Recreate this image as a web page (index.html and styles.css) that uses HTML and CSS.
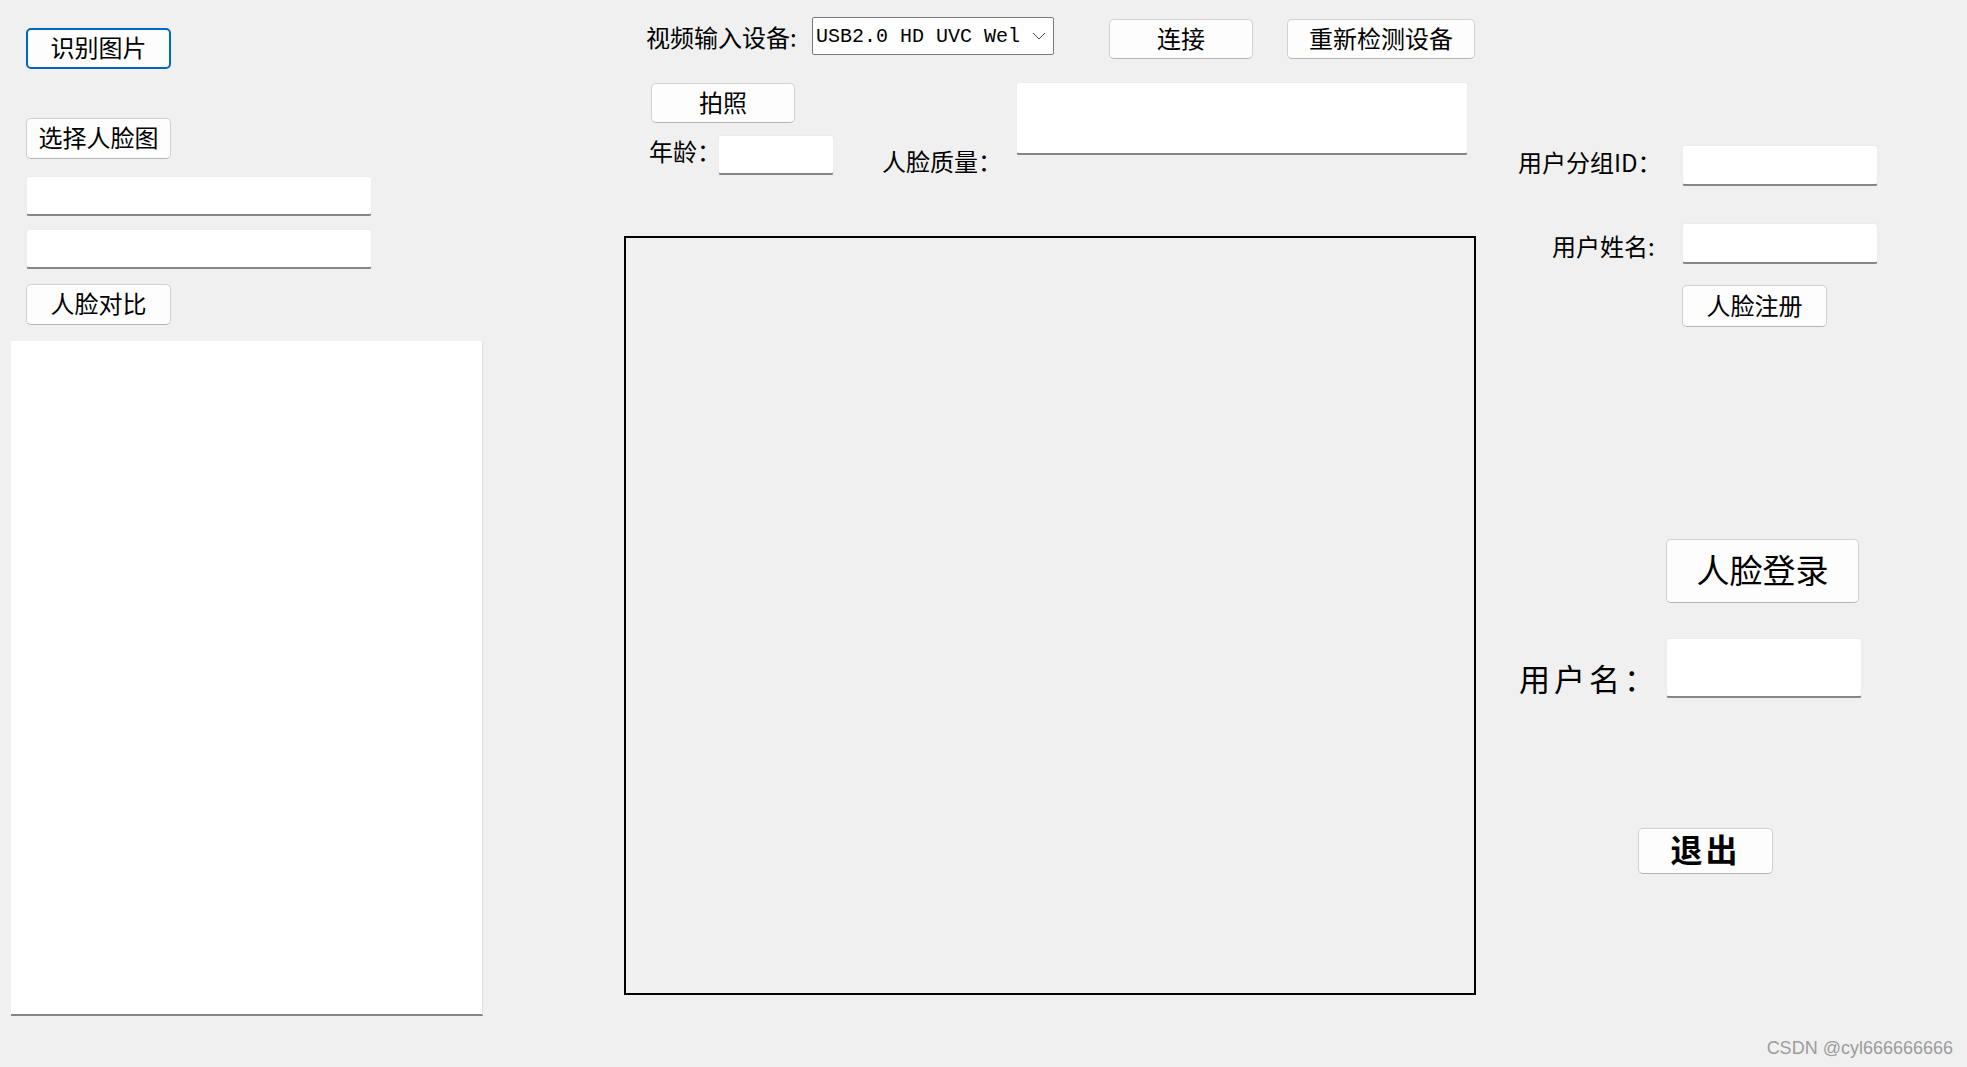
FILE: index.html
```html
<!DOCTYPE html>
<html lang="zh-CN">

<head>
  <meta charset="UTF-8" />
  <meta name="viewport" content="width=device-width, initial-scale=1.0" />
  <title>人脸识别</title>
  <link rel="stylesheet" href="styles.css">
</head>

<body>
  <div class="form">
    <div class="col-left">
      <button class="btn btn-focus btn-recognize">识别图片</button>
      <button class="btn btn-choose">选择人脸图</button>
      <input class="field field-path" type="text" />
      <input class="field field-path field-path2" type="text" />
      <button class="btn btn-compare">人脸对比</button>
      <div class="result-panel"></div>
    </div>

    <div class="col-center">
      <div class="device-row">
        <span class="lbl lbl-device">视频输入设备:</span>
        <div class="combo">
          <span class="combo-text">USB2.0 HD UVC Wel</span>
          <svg class="combo-arrow" width="14" height="8" viewBox="0 0 14 8">
            <polyline points="1,1 7,7 13,1" fill="none" stroke="#444" stroke-width="1" />
          </svg>
        </div>
        <button class="btn btn-connect">连接</button>
        <button class="btn btn-redetect">重新检测设备</button>
      </div>

      <div class="info-row">
        <div class="photo-block">
          <button class="btn btn-photo">拍照</button>
          <div class="age-row">
            <span class="lbl lbl-age">年龄：</span>
            <input class="field field-age" type="text" />
          </div>
        </div>
        <span class="lbl lbl-quality">人脸质量：</span>
        <div class="quality-box"></div>
      </div>

      <div class="video-box"></div>
    </div>

    <div class="col-right">
      <div class="reg-row reg-group">
        <span class="lbl lbl-group">用户分组ID：</span>
        <input class="field field-reg" type="text" />
      </div>
      <div class="reg-row reg-name">
        <span class="lbl lbl-name">用户姓名:</span>
        <input class="field field-reg" type="text" />
      </div>
      <button class="btn btn-register">人脸注册</button>

      <button class="btn btn-login">人脸登录</button>
      <div class="reg-row login-row">
        <span class="lbl lbl-user">用户名：</span>
        <input class="field field-user" type="text" />
      </div>
      <button class="btn btn-exit">退出</button>
    </div>
  </div>

  <div class="watermark">CSDN @cyl666666666</div>
</body>

</html>
```

FILE: styles.css
```css
body {
  margin: 0;
  width: 1967px;
  height: 1067px;
  overflow: hidden;
  position: relative;
  background-color: #f0f0f0;
  font-family: "Noto Sans CJK SC", "Noto Sans", sans-serif;
  color: #000;
}

.form {
  display: flex;
  height: 1067px;
}

/* controls */

.btn {
  display: flex;
  align-items: center;
  justify-content: center;
  box-sizing: border-box;
  padding: 0 0 3px;
  background-color: #fdfdfd;
  border: 1px solid #d0d0d0;
  border-bottom-color: #b4b4b4;
  border-radius: 5px;
  font-family: inherit;
  font-size: 24px;
  line-height: 1;
  color: #000;
  cursor: pointer;
}

.btn-focus {
  border: 2px solid #0067c0;
}

.field {
  display: block;
  box-sizing: border-box;
  margin: 0;
  padding: 0 6px;
  background-color: #fff;
  border: 1px solid #ececec;
  border-bottom: 2px solid #868686;
  border-radius: 3px;
  font-family: inherit;
  font-size: 22px;
  outline: none;
}

.lbl {
  font-size: 24px;
  line-height: 26px;
  white-space: nowrap;
}

/* left column */

.col-left {
  width: 483px;
  flex-shrink: 0;
}

.col-left .btn {
  width: 145px;
  height: 41px;
  margin-left: 26px;
}

.btn-recognize {
  margin-top: 28px;
}

.btn-choose {
  margin-top: 49px;
}

.field-path {
  width: 346px;
  height: 40px;
  margin: 17px 0 0 26px;
}

.field-path2 {
  margin-top: 13px;
}

.btn-compare {
  margin-top: 15px;
}

.result-panel {
  box-sizing: border-box;
  width: 472px;
  height: 675px;
  margin: 16px 0 0 11px;
  background-color: #fff;
  border-right: 1px solid #e2e2e2;
  border-bottom: 2px solid #858585;
}

/* center column */

.col-center {
  width: 852px;
  padding-left: 141px;
  flex-shrink: 0;
}

.device-row {
  display: flex;
  align-items: flex-start;
  padding-top: 17px;
}

.lbl-device {
  width: 166px;
  margin: 7px 0 0 22px;
}

.combo {
  display: flex;
  align-items: center;
  justify-content: space-between;
  box-sizing: border-box;
  width: 242px;
  height: 38px;
  padding: 0 7px 0 3px;
  background-color: #fff;
  border: 1px solid #7a7a7a;
  border-radius: 2px;
}

.combo-text {
  font-family: "Liberation Mono", monospace;
  font-size: 20px;
  white-space: nowrap;
}

.btn-connect {
  width: 144px;
  height: 40px;
  margin: 2px 0 0 55px;
}

.btn-redetect {
  width: 188px;
  height: 40px;
  margin: 2px 0 0 34px;
}

.info-row {
  display: flex;
  align-items: flex-start;
  margin-top: 23px;
}

.photo-block {
  width: 185px;
  margin-left: 25px;
}

.btn-photo {
  width: 144px;
  height: 40px;
  margin: 1px 0 0 2px;
}

.age-row {
  display: flex;
  align-items: flex-start;
  margin-top: 12px;
}

.lbl-age {
  width: 69px;
  padding-top: 3px;
}

.field-age {
  width: 116px;
  height: 40px;
}

.lbl-quality {
  margin: 66px 0 0 48px;
}

.quality-box {
  box-sizing: border-box;
  width: 452px;
  height: 73px;
  margin-left: 14px;
  background-color: #fff;
  border: 1px solid #ececec;
  border-bottom: 2px solid #868686;
  border-radius: 3px;
}

.video-box {
  box-sizing: border-box;
  width: 852px;
  height: 759px;
  margin-top: 61px;
  border: 2px solid #000;
}

/* right column */

.col-right {
  flex: 1;
}

.reg-row {
  display: flex;
  align-items: center;
}

.reg-group {
  margin-top: 145px;
}

.lbl-group {
  width: 164px;
  margin-left: 42px;
  padding-bottom: 7px;
}

.reg-name {
  margin-top: 37px;
}

.lbl-name {
  width: 130px;
  margin-left: 76px;
  padding-top: 5px;
}

.field-reg {
  width: 196px;
  height: 41px;
}

.btn-register {
  width: 145px;
  height: 42px;
  margin: 21px 0 0 206px;
}

.btn-login {
  width: 193px;
  height: 64px;
  margin: 212px 0 0 190px;
  font-size: 33px;
}

.login-row {
  margin-top: 35px;
}

.lbl-user {
  width: 147px;
  margin-left: 43px;
  padding-top: 20px;
  font-size: 31px;
  line-height: 34px;
  letter-spacing: 4px;
}

.field-user {
  width: 196px;
  height: 60px;
}

.btn-exit {
  width: 135px;
  height: 46px;
  margin: 130px 0 0 162px;
  padding-bottom: 6px;
  font-size: 32px;
  font-weight: bold;
  letter-spacing: 3px;
}

.watermark {
  position: absolute;
  right: 14px;
  bottom: 8px;
  font-family: "Liberation Sans", Arial, sans-serif;
  font-size: 18px;
  color: #9c9c9c;
}
```
